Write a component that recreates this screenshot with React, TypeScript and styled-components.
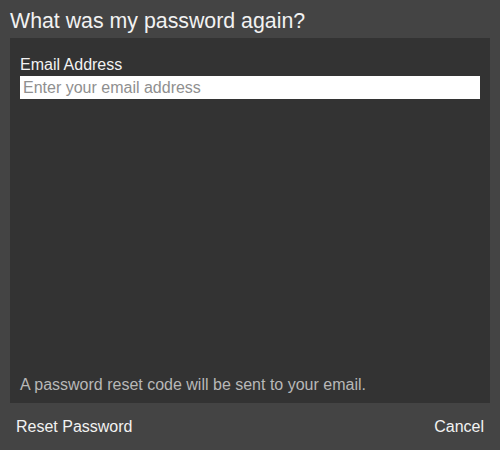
import React from 'react';
import styled, { createGlobalStyle } from 'styled-components';

const GlobalStyle = createGlobalStyle`
  html, body {
    margin: 0;
    padding: 0;
    background: #444444;
  }
  * {
    box-sizing: border-box;
  }
`;

const Dialog = styled.div`
  width: 500px;
  height: 450px;
  display: flex;
  flex-direction: column;
  background: #444444;
  color: #f0f0f0;
  font-family: 'Liberation Sans', Arial, sans-serif;
`;

const Title = styled.h1`
  margin: 0;
  height: 38px;
  padding: 9px 10px 0;
  font-size: 21.33px;
  font-weight: normal;
  line-height: 24px;
  color: #f2f2f2;
`;

const Panel = styled.div`
  flex: 1;
  margin: 0 10px;
  padding: 18px 10px 9px;
  display: flex;
  flex-direction: column;
  background: #333333;
`;

const Label = styled.label`
  font-size: 16px;
  line-height: 18px;
  margin-bottom: 2px;
  color: #f2f2f2;
`;

const Input = styled.input`
  height: 23px;
  width: 100%;
  border: none;
  outline: none;
  padding: 0 3px;
  background: #ffffff;
  font-family: inherit;
  font-size: 16px;
  color: #222;
  &::placeholder {
    color: #8f8f8f;
  }
`;

const Note = styled.p`
  margin: auto 0 0;
  font-size: 16px;
  line-height: 18px;
  color: #b8b8b8;
`;

const Footer = styled.div`
  height: 47px;
  display: flex;
  align-items: center;
  justify-content: space-between;
  padding: 0 16px 0 16px;
`;

const Action = styled.button`
  border: none;
  background: none;
  padding: 0;
  font-family: inherit;
  font-size: 16px;
  color: #f2f2f2;
  cursor: pointer;
`;

export default function App() {
  return (
    <>
      <GlobalStyle />
      <Dialog>
        <Title>What was my password again?</Title>
        <Panel>
          <Label htmlFor="email">Email Address</Label>
          <Input id="email" type="email" placeholder="Enter your email address" />
          <Note>A password reset code will be sent to your email.</Note>
        </Panel>
        <Footer>
          <Action>Reset Password</Action>
          <Action>Cancel</Action>
        </Footer>
      </Dialog>
    </>
  );
}
